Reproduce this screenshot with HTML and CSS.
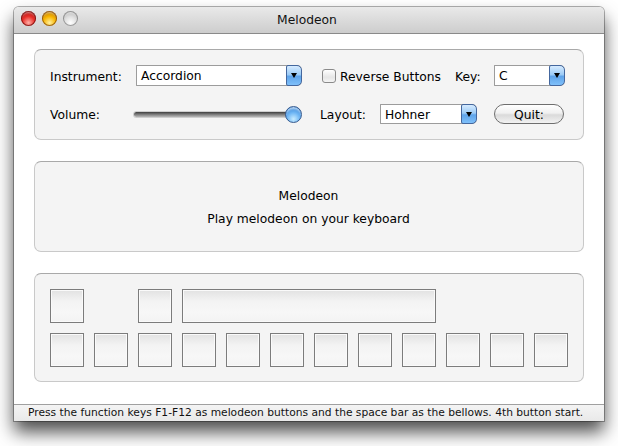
FILE: index.html
```html
<!DOCTYPE html>
<html>
<head>
<meta charset="utf-8">
<title>Melodeon</title>
<link rel="stylesheet" href="styles.css">
</head>
<body>
<div class="window">
  <div class="titlebar">
    <div class="lights">
      <span class="light red"></span>
      <span class="light amber"></span>
      <span class="light grey"></span>
    </div>
    <div class="title">Melodeon</div>
  </div>
  <div class="content">
    <div class="panel controls">
      <div class="row row1">
        <div class="lbl lbl-instrument">Instrument:</div>
        <div class="popup popup-instrument"><span class="popup-text">Accordion</span><span class="popup-arrow"></span></div>
        <div class="check-group"><span class="checkbox"></span><span class="check-label">Reverse Buttons</span></div>
        <div class="lbl lbl-key">Key:</div>
        <div class="popup popup-key"><span class="popup-text">C</span><span class="popup-arrow"></span></div>
      </div>
      <div class="row row2">
        <div class="lbl lbl-volume">Volume:</div>
        <div class="slider"><span class="track"></span><span class="knob"></span></div>
        <div class="lbl lbl-layout">Layout:</div>
        <div class="popup popup-layout"><span class="popup-text">Hohner</span><span class="popup-arrow"></span></div>
        <div class="quit">Quit:</div>
      </div>
    </div>
    <div class="panel info">
      <div class="info-line">Melodeon</div>
      <div class="info-line">Play melodeon on your keyboard</div>
    </div>
    <div class="panel keys">
      <div class="key k1"></div>
      <div class="key k3"></div>
      <div class="key bellows"></div>
      <div class="key r2"></div>
      <div class="key r2"></div>
      <div class="key r2"></div>
      <div class="key r2"></div>
      <div class="key r2"></div>
      <div class="key r2"></div>
      <div class="key r2"></div>
      <div class="key r2"></div>
      <div class="key r2"></div>
      <div class="key r2"></div>
      <div class="key r2"></div>
      <div class="key r2"></div>
    </div>
  </div>
  <div class="statusbar">Press the function keys F1-F12 as melodeon buttons and the space bar as the bellows. 4th button start.</div>
</div>
</body>
</html>
```

FILE: styles.css
```css
* { box-sizing: border-box; }
html, body { margin: 0; background: #ffffff; }
body {
  min-height: 446px;
  padding: 7px 0 0 14px;
  font-family: "DejaVu Sans", "Liberation Sans", sans-serif;
  font-size: 12.3px;
  color: #000;
}
.window {
  width: 590px;
  height: 414px;
  display: flex;
  flex-direction: column;
  background: #fff;
  border-radius: 5px 5px 0 0;
  box-shadow: 0 0 0 1px rgba(0,0,0,0.3), 0 11px 18px rgba(0,0,0,0.7);
}
.titlebar {
  height: 27px;
  display: flex;
  align-items: flex-start;
  background: linear-gradient(#e9e9e9, #cdcdcd);
  border-bottom: 1px solid #8a8a8a;
  border-radius: 5px 5px 0 0;
}
.lights { display: flex; gap: 6px; padding: 4px 0 0 7px; }
.light {
  width: 15px; height: 15px; border-radius: 50%;
  display: block;
}
.light.red {
  background: radial-gradient(circle at 50% 78%, #ffb0a8 0%, #e8302a 45%, #8e0606 100%);
  box-shadow: inset 0 0 0 1px rgba(100,0,0,0.7), inset 0 3px 2px -1px rgba(255,255,255,0.5);
}
.light.amber {
  background: radial-gradient(circle at 50% 78%, #fff0a0 0%, #f7b400 45%, #a05c00 100%);
  box-shadow: inset 0 0 0 1px rgba(120,60,0,0.7), inset 0 3px 2px -1px rgba(255,255,255,0.5);
}
.light.grey {
  background: radial-gradient(circle at 50% 78%, #ffffff 0%, #dedede 45%, #a4a4a4 100%);
  box-shadow: inset 0 0 0 1px rgba(90,90,90,0.55), inset 0 3px 2px -1px rgba(255,255,255,0.6);
}
.title {
  flex: 1;
  text-align: center;
  padding-top: 6px;
  margin-right: 68px;
  color: #111;
}
.content {
  flex: 1;
  display: flex;
  flex-direction: column;
  gap: 21px;
  padding: 15px 20px 0 20px;
}
.panel {
  background: #f4f4f4;
  border: 1px solid #c9c9c9;
  border-top-color: #a9a9a9;
  border-radius: 7px;
}
.controls {
  height: 91px;
  padding: 15px 0 0 15px;
  display: flex;
  flex-direction: column;
  gap: 18px;
}
.row { display: flex; align-items: center; }
.row1 { height: 21px; }
.row2 { height: 20px; }
.lbl { padding-top: 2px; }
.lbl-instrument { width: 86px; }
.lbl-volume { width: 84px; }
.lbl-key { width: 39px; }
.lbl-layout { width: 60px; margin-left: 18px; }
.popup {
  height: 100%;
  display: flex;
  background: #fff;
  border: 1px solid #9c9c9c;
  border-right: none;
  border-radius: 1px 5px 5px 1px;
}
.popup-instrument { width: 166px; }
.popup-key { width: 71px; }
.popup-layout { width: 97px; }
.popup-text { flex: 1; padding: 3px 0 0 4px; }
.popup-arrow {
  width: 16px;
  margin: -1px 0;
  border: 1px solid #44679e;
  border-radius: 2px 5px 5px 2px;
  background: linear-gradient(#d6ebff 0%, #9ccbf6 45%, #5fa4ea 55%, #7fc0fa 100%);
  display: flex;
  align-items: center;
  justify-content: center;
}
.popup-arrow::after {
  content: "";
  border-left: 3.5px solid transparent;
  border-right: 3.5px solid transparent;
  border-top: 5px solid #000;
}
.check-group { display: flex; align-items: center; width: 133px; margin-left: 20px; padding-top: 1px; }
.checkbox {
  width: 14px; height: 14px;
  border: 1px solid #8a8a8a;
  border-radius: 3px;
  background: linear-gradient(#ffffff, #e6e6e6 60%, #f4f4f4);
  margin-right: 4px;
}
.check-label { padding-top: 1px; }
.slider { width: 168px; height: 20px; position: relative; display: flex; align-items: center; }
.track {
  display: block;
  width: 166px;
  height: 5px;
  border-radius: 3px;
  background: linear-gradient(#3e3e3e, #8a8a8a 60%, #b8b8b8);
  box-shadow: 0 0 0 1px rgba(0,0,0,0.15);
}
.knob {
  position: absolute;
  right: 0;
  top: 2px;
  width: 17px; height: 17px;
  border-radius: 50%;
  border: 1px solid #365a8e;
  background: radial-gradient(circle at 50% 80%, #c8ecff 0%, #6fb6f4 45%, #3f8ad8 80%, #5d9ee6 100%);
  box-shadow: inset 0 3px 2px -1px rgba(255,255,255,0.6);
}
.quit {
  width: 70px;
  margin-left: 17px;
  height: 100%;
  border: 1px solid #6e6e6e;
  border-radius: 10px;
  background: linear-gradient(#ffffff 0%, #f0f0f0 45%, #dadada 55%, #f2f2f2 100%);
  display: flex;
  align-items: center;
  justify-content: center;
  padding-top: 1px;
}
.info {
  height: 91px;
  display: flex;
  flex-direction: column;
  align-items: center;
  justify-content: center;
  gap: 9px;
  padding: 1px 1px 0 0;
}
.keys {
  height: 109px;
  padding: 15px 0 0 15px;
  display: grid;
  grid-template-columns: repeat(12, 34px);
  grid-template-rows: 34px 34px;
  column-gap: 10px;
  row-gap: 10px;
}
.key {
  border: 1px solid #7c7c7c;
  box-shadow: inset 0 0 0 1px #fafafa;
  background: linear-gradient(#e2e2e2 0%, #f3f3f3 35%, #f7f7f7 70%, #f3f3f3 100%);
}
.k1 { grid-column: 1; grid-row: 1; }
.k3 { grid-column: 3; grid-row: 1; }
.bellows { grid-column: 4 / span 6; grid-row: 1; }
.r2 { grid-row: 2; }
.statusbar {
  height: 17px;
  background: linear-gradient(#f4f4f4, #e9e9e9);
  border-top: 1px solid #a0a0a0;
  padding: 1px 0 0 14px;
  font-size: 10.7px;
  white-space: nowrap;
  color: #111;
}
```
